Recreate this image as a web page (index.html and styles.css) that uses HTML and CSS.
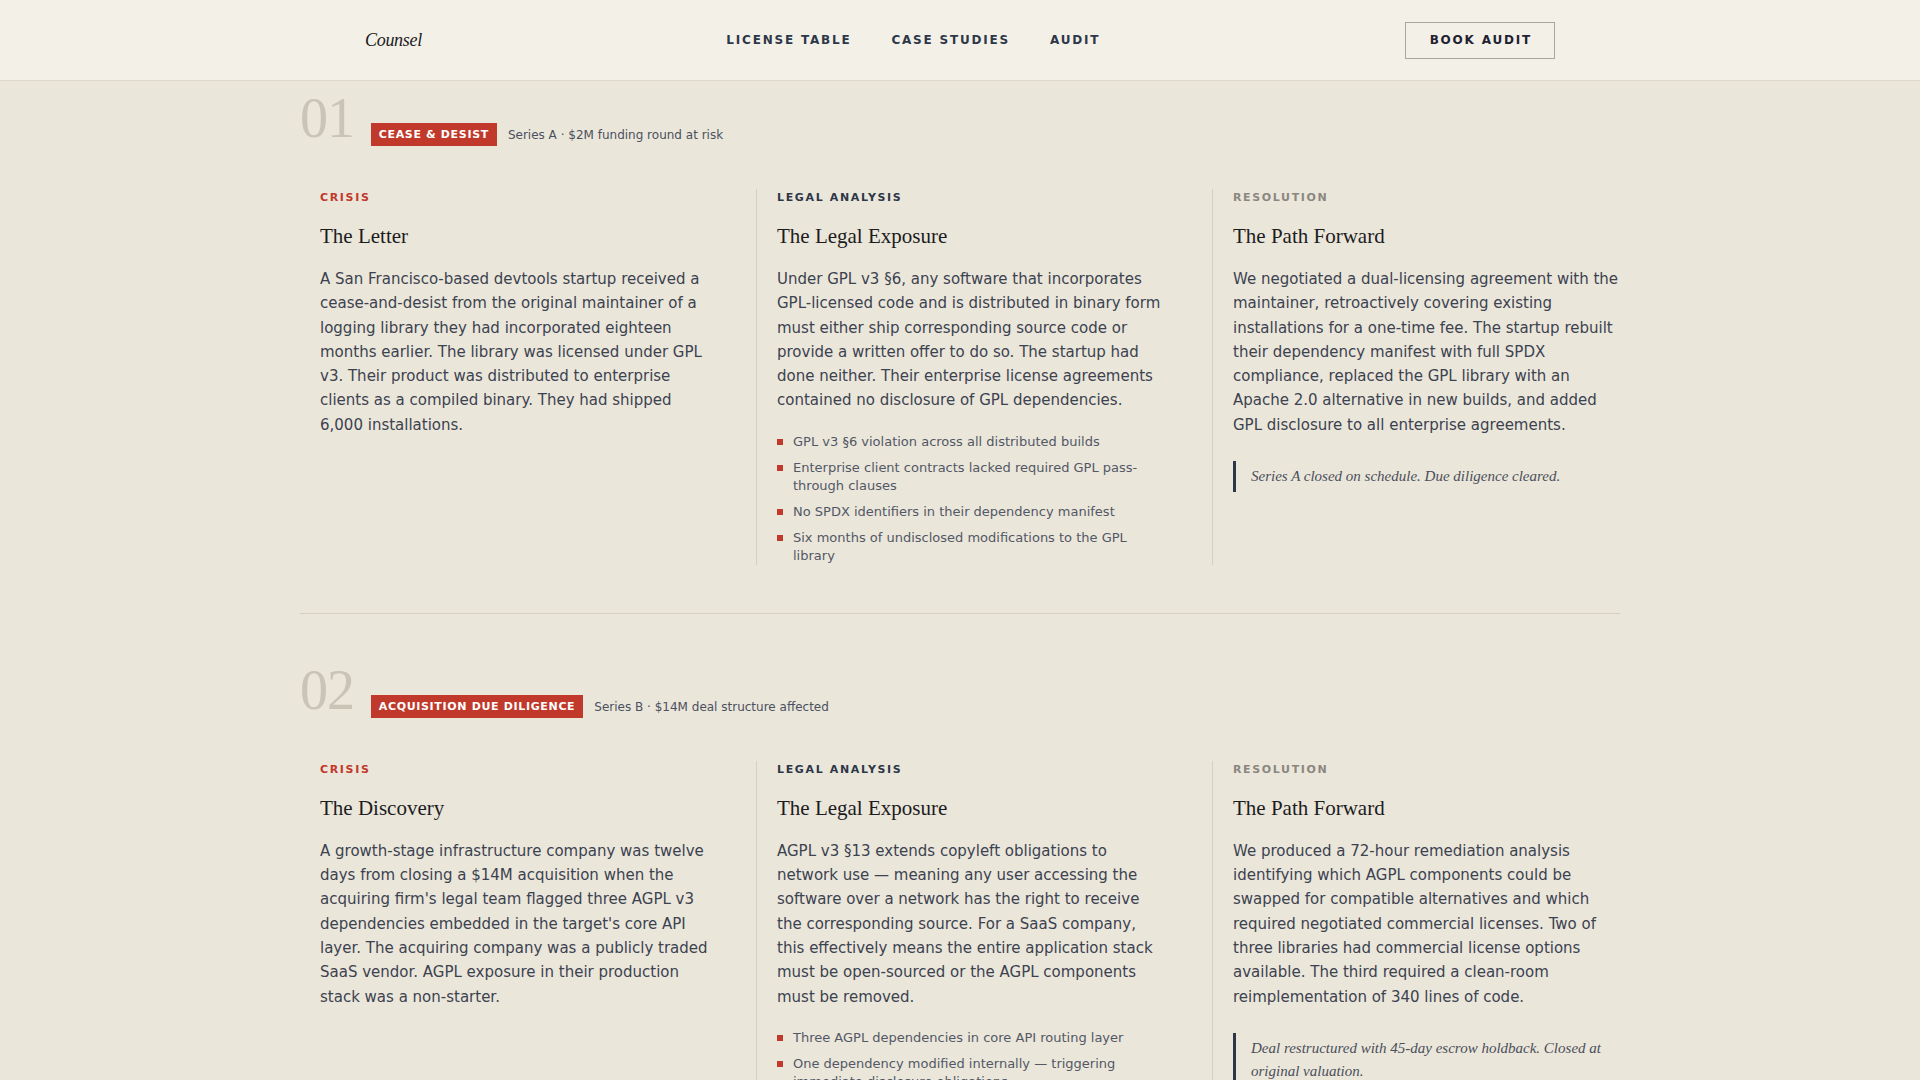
FILE: index.html
```html
<!DOCTYPE html>
<html lang="en">
<head>
  <meta charset="UTF-8">
  <meta name="viewport" content="width=device-width, initial-scale=1.0">
  <title>Case Studies — Counsel</title>
  <link rel="stylesheet" href="styles.css">
</head>
<body>
  <header class="site-header">
    <div class="header-inner">
      <a class="logo" href="#">Counsel</a>
      <nav class="nav">
        <a href="#">License Table</a>
        <a href="#">Case Studies</a>
        <a href="#">Audit</a>
      </nav>
      <a class="btn-outline" href="#">Book Audit</a>
    </div>
  </header>

  <main class="cases">
    <section class="case">
      <div class="case-head">
        <span class="case-num">01</span>
        <span class="tag">Cease &amp; Desist</span>
        <span class="case-meta">Series A · $2M funding round at risk</span>
      </div>

      <div class="case-grid">
        <div class="col">
          <div class="label label-crisis">Crisis</div>
          <h3>The Letter</h3>
          <p>A San Francisco-based devtools startup received a cease-and-desist from the original maintainer of a logging library they had incorporated eighteen months earlier. The library was licensed under GPL v3. Their product was distributed to enterprise clients as a compiled binary. They had shipped 6,000 installations.</p>
        </div>

        <div class="col">
          <div class="label label-legal">Legal Analysis</div>
          <h3>The Legal Exposure</h3>
          <p>Under GPL v3 §6, any software that incorporates GPL-licensed code and is distributed in binary form must either ship corresponding source code or provide a written offer to do so. The startup had done neither. Their enterprise license agreements contained no disclosure of GPL dependencies.</p>
          <ul class="findings">
            <li>GPL v3 §6 violation across all distributed builds</li>
            <li>Enterprise client contracts lacked required GPL pass-through clauses</li>
            <li>No SPDX identifiers in their dependency manifest</li>
            <li>Six months of undisclosed modifications to the GPL library</li>
          </ul>
        </div>

        <div class="col">
          <div class="label label-resolution">Resolution</div>
          <h3>The Path Forward</h3>
          <p>We negotiated a dual-licensing agreement with the maintainer, retroactively covering existing installations for a one-time fee. The startup rebuilt their dependency manifest with full SPDX compliance, replaced the GPL library with an Apache 2.0 alternative in new builds, and added GPL disclosure to all enterprise agreements.</p>
          <blockquote class="outcome">Series A closed on schedule. Due diligence cleared.</blockquote>
        </div>
      </div>
    </section>

    <section class="case">
      <div class="case-head">
        <span class="case-num">02</span>
        <span class="tag">Acquisition Due Diligence</span>
        <span class="case-meta">Series B · $14M deal structure affected</span>
      </div>

      <div class="case-grid">
        <div class="col">
          <div class="label label-crisis">Crisis</div>
          <h3>The Discovery</h3>
          <p>A growth-stage infrastructure company was twelve days from closing a $14M acquisition when the acquiring firm's legal team flagged three AGPL v3 dependencies embedded in the target's core API layer. The acquiring company was a publicly traded SaaS vendor. AGPL exposure in their production stack was a non-starter.</p>
        </div>

        <div class="col">
          <div class="label label-legal">Legal Analysis</div>
          <h3>The Legal Exposure</h3>
          <p>AGPL v3 §13 extends copyleft obligations to network use — meaning any user accessing the software over a network has the right to receive the corresponding source. For a SaaS company, this effectively means the entire application stack must be open-sourced or the AGPL components must be removed.</p>
          <ul class="findings">
            <li>Three AGPL dependencies in core API routing layer</li>
            <li>One dependency modified internally — triggering immediate disclosure obligations</li>
            <li>No license inventory maintained since Series A</li>
          </ul>
        </div>

        <div class="col">
          <div class="label label-resolution">Resolution</div>
          <h3>The Path Forward</h3>
          <p>We produced a 72-hour remediation analysis identifying which AGPL components could be swapped for compatible alternatives and which required negotiated commercial licenses. Two of three libraries had commercial license options available. The third required a clean-room reimplementation of 340 lines of code.</p>
          <blockquote class="outcome">Deal restructured with 45-day escrow holdback. Closed at original valuation.</blockquote>
        </div>
      </div>
    </section>
  </main>
</body>
</html>
```

FILE: styles.css
```css
:root {
  --bg: #ebe6da;
  --header-bg: #f3f0e8;
  --line: #d6d0c2;
  --ink: #1c1c1e;
  --text: #3b4250;
  --muted: #525866;
  --slate: #2d3748;
  --red: #c0392b;
  --gray: #8a8781;
  --serif: 'Liberation Serif', 'Times New Roman', serif;
  --sans: 'DejaVu Sans', 'Verdana', sans-serif;
}

* {
  margin: 0;
  padding: 0;
  box-sizing: border-box;
}

body {
  font-family: var(--sans);
  background: var(--bg);
  color: var(--text);
}

a {
  color: inherit;
  text-decoration: none;
}

/* header */
.site-header {
  background: var(--header-bg);
  border-bottom: 1px solid #ddd7ca;
}

.header-inner {
  max-width: 1200px;
  height: 80px;
  margin: 0 auto;
  padding: 0 5px;
  display: flex;
  align-items: center;
  justify-content: space-between;
}

.logo {
  font-family: var(--serif);
  font-style: italic;
  font-size: 18px;
  letter-spacing: -0.3px;
  color: var(--ink);
}

.nav {
  display: flex;
  gap: 40px;
}

.nav a,
.btn-outline {
  font-size: 12px;
  font-weight: 600;
  letter-spacing: 0.15em;
  text-transform: uppercase;
  color: var(--slate);
}

.btn-outline {
  color: #1f2230;
  border: 1px solid #aaa69e;
  padding: 10px 22px 10px 24px;
  line-height: 15px;
}

/* case studies */
.cases {
  max-width: 1320px;
  margin: 0 auto;
}

.case {
  padding: 48px 0;
  border-bottom: 1px solid var(--line);
}

.case:first-child {
  padding-top: 9px;
}

.case-head {
  display: flex;
  align-items: flex-end;
  margin-bottom: 43px;
}

.case-num {
  font-family: var(--serif);
  font-size: 56px;
  line-height: 1;
  letter-spacing: -0.02em;
  color: #c9c4b6;
  margin-right: 17px;
}

.tag {
  background: var(--red);
  color: #fff;
  font-size: 11px;
  font-weight: 700;
  letter-spacing: 0.06em;
  text-transform: uppercase;
  line-height: 15px;
  padding: 4px 8px;
}

.case-meta {
  font-size: 12px;
  color: #4a5060;
  margin-left: 11px;
  margin-bottom: 4px;
}

.case-grid {
  display: grid;
  grid-template-columns: repeat(3, 1fr);
  gap: 48px;
}

.col {
  padding-left: 20px;
}

.col + .col {
  border-left: 1px solid var(--line);
}

.label {
  font-size: 11px;
  font-weight: 700;
  letter-spacing: 0.15em;
  text-transform: uppercase;
  line-height: 17px;
  margin-bottom: 16px;
}

.label-crisis { color: var(--red); }
.label-legal { color: var(--slate); }
.label-resolution { color: var(--gray); }

.col h3 {
  font-family: var(--serif);
  font-weight: 400;
  font-size: 21px;
  line-height: 28px;
  color: var(--ink);
  margin-bottom: 17px;
}

.col p {
  font-size: 15px;
  line-height: 24.3px;
}

.findings {
  list-style: none;
  margin-top: 20px;
}

.findings li {
  position: relative;
  padding-left: 16px;
  font-size: 13px;
  line-height: 18px;
  color: var(--muted);
  margin-bottom: 8px;
}

.findings li:last-child {
  margin-bottom: 0;
}

.findings li::before {
  content: '';
  position: absolute;
  left: 0;
  top: 6px;
  width: 6px;
  height: 6px;
  background: var(--red);
}

.outcome {
  margin-top: 24px;
  border-left: 3px solid var(--slate);
  padding: 4px 0 4px 15px;
  font-family: var(--serif);
  font-style: italic;
  font-size: 15px;
  line-height: 23.4px;
  color: #4a4f5a;
}
```
